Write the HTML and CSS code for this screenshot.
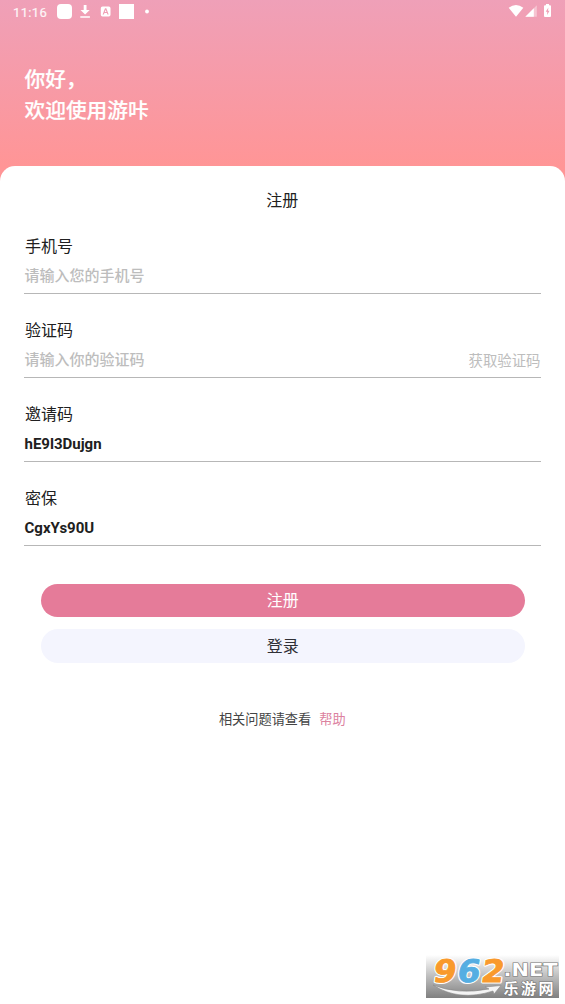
FILE: index.html
```html
<!DOCTYPE html>
<html lang="zh-CN">
<head>
<meta charset="utf-8">
<meta name="viewport" content="width=device-width, initial-scale=1">
<title>注册</title>
<link rel="stylesheet" href="styles.css">
</head>
<body>
<div class="screen">
  <header class="hero">
    <div class="status">
      <span class="time">11:16</span>
      <svg class="status-left" width="94" height="24" viewBox="57 0 94 24" fill="#fff">
        <rect x="57" y="4" width="15" height="15" rx="4"/>
        <path d="M83.700 5h2.800v5h3.200l-4.600 4.500-4.600-4.500h3.200zM80.300 16.300h9.600v1.400h-9.600z"/>
        <path fill-rule="evenodd" d="M102.500 6.500h6.300q1.700 0 1.700 1.700v6.600q0 1.700-1.700 1.700h-6.300q-1.700 0-1.700-1.700V8.200q0-1.700 1.700-1.700zM105 8.300l-2.400 6.200h1.300l.5-1.400h2.500l.5 1.400h1.300l-2.400-6.200zM105.650 9.800l.8 2.200h-1.600z"/>
        <rect x="119" y="4" width="15" height="15"/>
        <circle cx="147" cy="11.500" r="1.900"/>
      </svg>
      <svg class="status-right" width="44" height="24" viewBox="508 0 44 24" fill="#fff">
        <path d="M508.700 7.800q7.300-5.400 14.600 0L516 16.800z"/>
        <path d="M536.800 5.300v11.500h-11.500z" opacity=".4"/>
        <path d="M533.800 8.300v8.500h-8.500z"/>
        <path fill-rule="evenodd" d="M546 4h3v1.300h1q1 0 1 1V16q0 1-1 1h-5q-1 0-1-1V6.300q0-1 1-1h1zM548.400 7.500l-2.700 4.300h1.500v3.200l2.300-4.300H548z"/>
      </svg>
    </div>
    <h1 class="greeting">你好，<br>欢迎使用游咔</h1>
  </header>
  <main class="card">
    <h2 class="title">注册</h2>
    <div class="fields">
      <div class="field"><label class="label">手机号</label><div class="entry"><span class="hint">请输入您的手机号</span></div></div>
      <div class="field"><label class="label">验证码</label><div class="entry"><span class="hint">请输入你的验证码</span><span class="send">获取验证码</span></div></div>
      <div class="field"><label class="label">邀请码</label><div class="entry"><span class="value">hE9l3Dujgn</span></div></div>
      <div class="field"><label class="label">密保</label><div class="entry"><span class="value">CgxYs90U</span></div></div>
    </div>
    <div class="actions">
      <div class="button primary">注册</div>
      <div class="button secondary">登录</div>
    </div>
    <p class="help">相关问题请查看<span class="help-link">帮助</span></p>
  </main>
  <svg class="watermark" width="133" height="43" viewBox="0 0 133 43">
    <defs><linearGradient id="shade" x1="0" y1="0" x2="0" y2="1">
      <stop offset="0" stop-color="#fff"/><stop offset=".5" stop-color="#bdbdbd"/><stop offset="1" stop-color="#808080"/>
    </linearGradient></defs>
    <rect width="133" height="43" fill="url(#shade)"/>
    <path d="M7 30Q32 40 63 34l-4-2 16-1.500-7 8.500-1-3Q33 47 7 30z" fill="#f4f4f4" stroke="#888" stroke-width=".6"/>
    <g transform="translate(0 27) skewX(-9)">
      <g class="digits digits-outline">
        <text x="6" y="0" textLength="23" lengthAdjust="spacingAndGlyphs">9</text>
        <text x="30" y="0" textLength="23" lengthAdjust="spacingAndGlyphs">6</text>
        <text x="54" y="0" textLength="23" lengthAdjust="spacingAndGlyphs">2</text>
      </g>
      <g class="digits">
        <text class="orange" x="6" y="0" textLength="23" lengthAdjust="spacingAndGlyphs">9</text>
        <text class="blue" x="30" y="0" textLength="23" lengthAdjust="spacingAndGlyphs">6</text>
        <text class="orange" x="54" y="0" textLength="23" lengthAdjust="spacingAndGlyphs">2</text>
      </g>
    </g>
    <text class="domain" x="77.500" y="20.500" textLength="54" lengthAdjust="spacingAndGlyphs">.NET</text>
    <text class="site" x="77.500" y="38.500" textLength="50">乐游网</text>
  </svg>
</div>
</body>
</html>
```
FILE: styles.css
```css
* { box-sizing: border-box; }
body {
  margin: 0;
  background: #fff;
  font-family: Roboto, "Noto Sans CJK SC", sans-serif;
  color: #202020;
}
.screen { position: relative; height: 1004px; overflow: hidden; }
.hero {
  height: 181px;
  background: linear-gradient(#efa0b8 0, #ff9596 166px);
  color: #fff;
}
.status {
  display: flex;
  align-items: center;
  height: 24px;
  padding: 0 13px;
}
.status svg { display: block; }
.time {
  width: 44px;
  font-size: 13px;
  letter-spacing: .35px;
  -webkit-text-stroke: .2px #fff;
  opacity: .9;
}
.status-right { margin-left: auto; }
.greeting {
  margin: 41px 0 0 24.500px;
  font-size: 20.700px;
  line-height: 31px;
  font-weight: 500;
  -webkit-text-stroke: .2px #fff;
}
.card {
  position: relative;
  margin-top: -15.500px;
  height: 838px;
  padding: 18.500px 24.500px 0 24px;
  border-radius: 15px 15px 0 0;
  background: #fff;
}
.title {
  margin: 0;
  text-align: center;
  font-size: 16px;
  line-height: 34px;
  font-weight: 400;
}
.fields { display: grid; gap: 22px; padding-top: 15px; }
.field { height: 61px; margin-bottom: 1px; border-bottom: 1px solid #b7b7b7; }
.label { display: block; padding-left: 1px; font-size: 16px; line-height: 28px; }
.entry {
  display: flex;
  justify-content: space-between;
  align-items: center;
  height: 30px;
  padding-left: .5px;
}
.hint { padding-bottom: 3px; font-size: 15px; font-weight: 500; color: #bdbdbd; }
.send { padding-bottom: 2px; font-size: 14.400px; color: #bdbdbd; }
.value { font-size: 15px; font-weight: 700; }
.actions { display: grid; gap: 12px; padding: 36.500px 16px 0 17px; }
.button {
  height: 33.500px;
  border-radius: 17px;
  text-align: center;
  font-size: 16px;
  line-height: 34px;
}
.primary { background: #e57b99; color: #fff; }
.secondary { background: #f4f5fe; color: #303036; line-height: 35px; }
.help {
  margin: 47.500px 0 0;
  text-align: center;
  font-size: 13.200px;
  line-height: 20px;
  color: #444;
}
.help-link { margin-left: 8px; color: #dc829f; }
.watermark { position: absolute; left: 426px; top: 955px; overflow: visible; }
.digits { font: 700 31px "DejaVu Sans", sans-serif; stroke-width: .8px; }
.digits-outline { fill: #fff; stroke: #fff; stroke-width: 3px; stroke-linejoin: round; }
.orange { fill: #f99a2c; stroke: #f99a2c; }
.blue { fill: #55aee2; stroke: #55aee2; }
.domain, .site {
  fill: #fff;
  stroke: #777;
  stroke-width: 1.200px;
  paint-order: stroke;
}
.domain { font: 700 17px "DejaVu Sans", sans-serif; }
.site { font: 700 15px "Noto Sans CJK SC", sans-serif; }
```
